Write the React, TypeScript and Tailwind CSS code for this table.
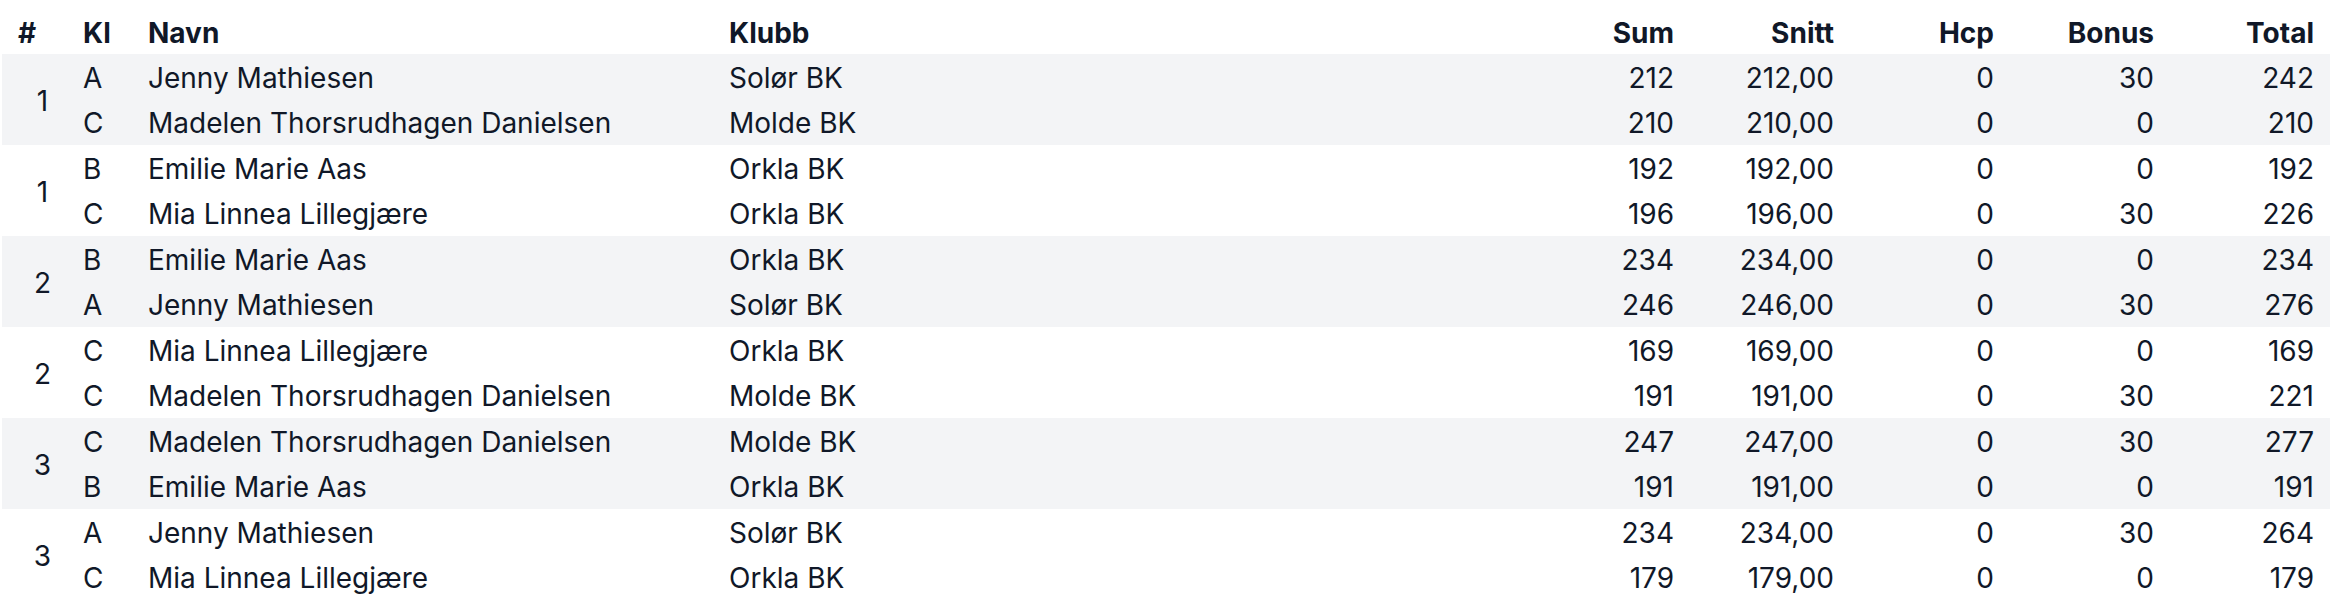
const rounds = [
  {
    no: 1,
    players: [
      { kl: "A", name: "Jenny Mathiesen", club: "Solør BK", sum: 212, hcp: 0, bonus: 30 },
      { kl: "C", name: "Madelen Thorsrudhagen Danielsen", club: "Molde BK", sum: 210, hcp: 0, bonus: 0 },
    ],
  },
  {
    no: 1,
    players: [
      { kl: "B", name: "Emilie Marie Aas", club: "Orkla BK", sum: 192, hcp: 0, bonus: 0 },
      { kl: "C", name: "Mia Linnea Lillegjære", club: "Orkla BK", sum: 196, hcp: 0, bonus: 30 },
    ],
  },
  {
    no: 2,
    players: [
      { kl: "B", name: "Emilie Marie Aas", club: "Orkla BK", sum: 234, hcp: 0, bonus: 0 },
      { kl: "A", name: "Jenny Mathiesen", club: "Solør BK", sum: 246, hcp: 0, bonus: 30 },
    ],
  },
  {
    no: 2,
    players: [
      { kl: "C", name: "Mia Linnea Lillegjære", club: "Orkla BK", sum: 169, hcp: 0, bonus: 0 },
      { kl: "C", name: "Madelen Thorsrudhagen Danielsen", club: "Molde BK", sum: 191, hcp: 0, bonus: 30 },
    ],
  },
  {
    no: 3,
    players: [
      { kl: "C", name: "Madelen Thorsrudhagen Danielsen", club: "Molde BK", sum: 247, hcp: 0, bonus: 30 },
      { kl: "B", name: "Emilie Marie Aas", club: "Orkla BK", sum: 191, hcp: 0, bonus: 0 },
    ],
  },
  {
    no: 3,
    players: [
      { kl: "A", name: "Jenny Mathiesen", club: "Solør BK", sum: 234, hcp: 0, bonus: 30 },
      { kl: "C", name: "Mia Linnea Lillegjære", club: "Orkla BK", sum: 179, hcp: 0, bonus: 0 },
    ],
  },
];

const snitt = (n: number) => n.toFixed(2).replace(".", ",");

export default function App() {
  return (
    <div className="bg-white pl-[2px] pr-[14px] h-[614px] text-gray-900 text-[28px]" style={{ fontFamily: "Inter, 'Noto Sans', sans-serif" }}>
      <table className="w-full border-collapse table-fixed">
        <colgroup>
          <col className="w-[65px]" />
          <col className="w-[65px]" />
          <col className="w-[581px]" />
          <col />
          <col className="w-[160px]" />
          <col className="w-[160px]" />
          <col className="w-[160px]" />
          <col className="w-[160px]" />
          <col className="w-[160px]" />
        </colgroup>
        <thead>
          <tr className="h-[54px] font-bold">
            <th className="pl-4 pt-[11px] text-left">#</th>
            <th className="pl-4 pt-[11px] text-left">Kl</th>
            <th className="pl-4 pt-[11px] text-left">Navn</th>
            <th className="pl-4 pt-[11px] text-left">Klubb</th>
            <th className="pr-4 pt-[11px] text-right">Sum</th>
            <th className="pr-4 pt-[11px] text-right">Snitt</th>
            <th className="pr-4 pt-[11px] text-right">Hcp</th>
            <th className="pr-4 pt-[11px] text-right">Bonus</th>
            <th className="pr-4 pt-[11px] text-right">Total</th>
          </tr>
        </thead>
        {rounds.map((r, gi) => (
          <tbody key={gi} className={gi % 2 === 0 ? "bg-gray-100" : "bg-white"}>
            {r.players.map((p, i) => (
              <tr key={i} className="h-[45.5px] [&>td]:pt-[2px]">
                {i === 0 && (
                  <td rowSpan={2} className="pl-4 text-center">
                    {r.no}
                  </td>
                )}
                <td className="pl-4">{p.kl}</td>
                <td className="pl-4 whitespace-nowrap">{p.name}</td>
                <td className="pl-4">{p.club}</td>
                <td className="pr-4 text-right">{p.sum}</td>
                <td className="pr-4 text-right">{snitt(p.sum)}</td>
                <td className="pr-4 text-right">{p.hcp}</td>
                <td className="pr-4 text-right">{p.bonus}</td>
                <td className="pr-4 text-right">{p.sum + p.hcp + p.bonus}</td>
              </tr>
            ))}
          </tbody>
        ))}
      </table>
    </div>
  );
}
